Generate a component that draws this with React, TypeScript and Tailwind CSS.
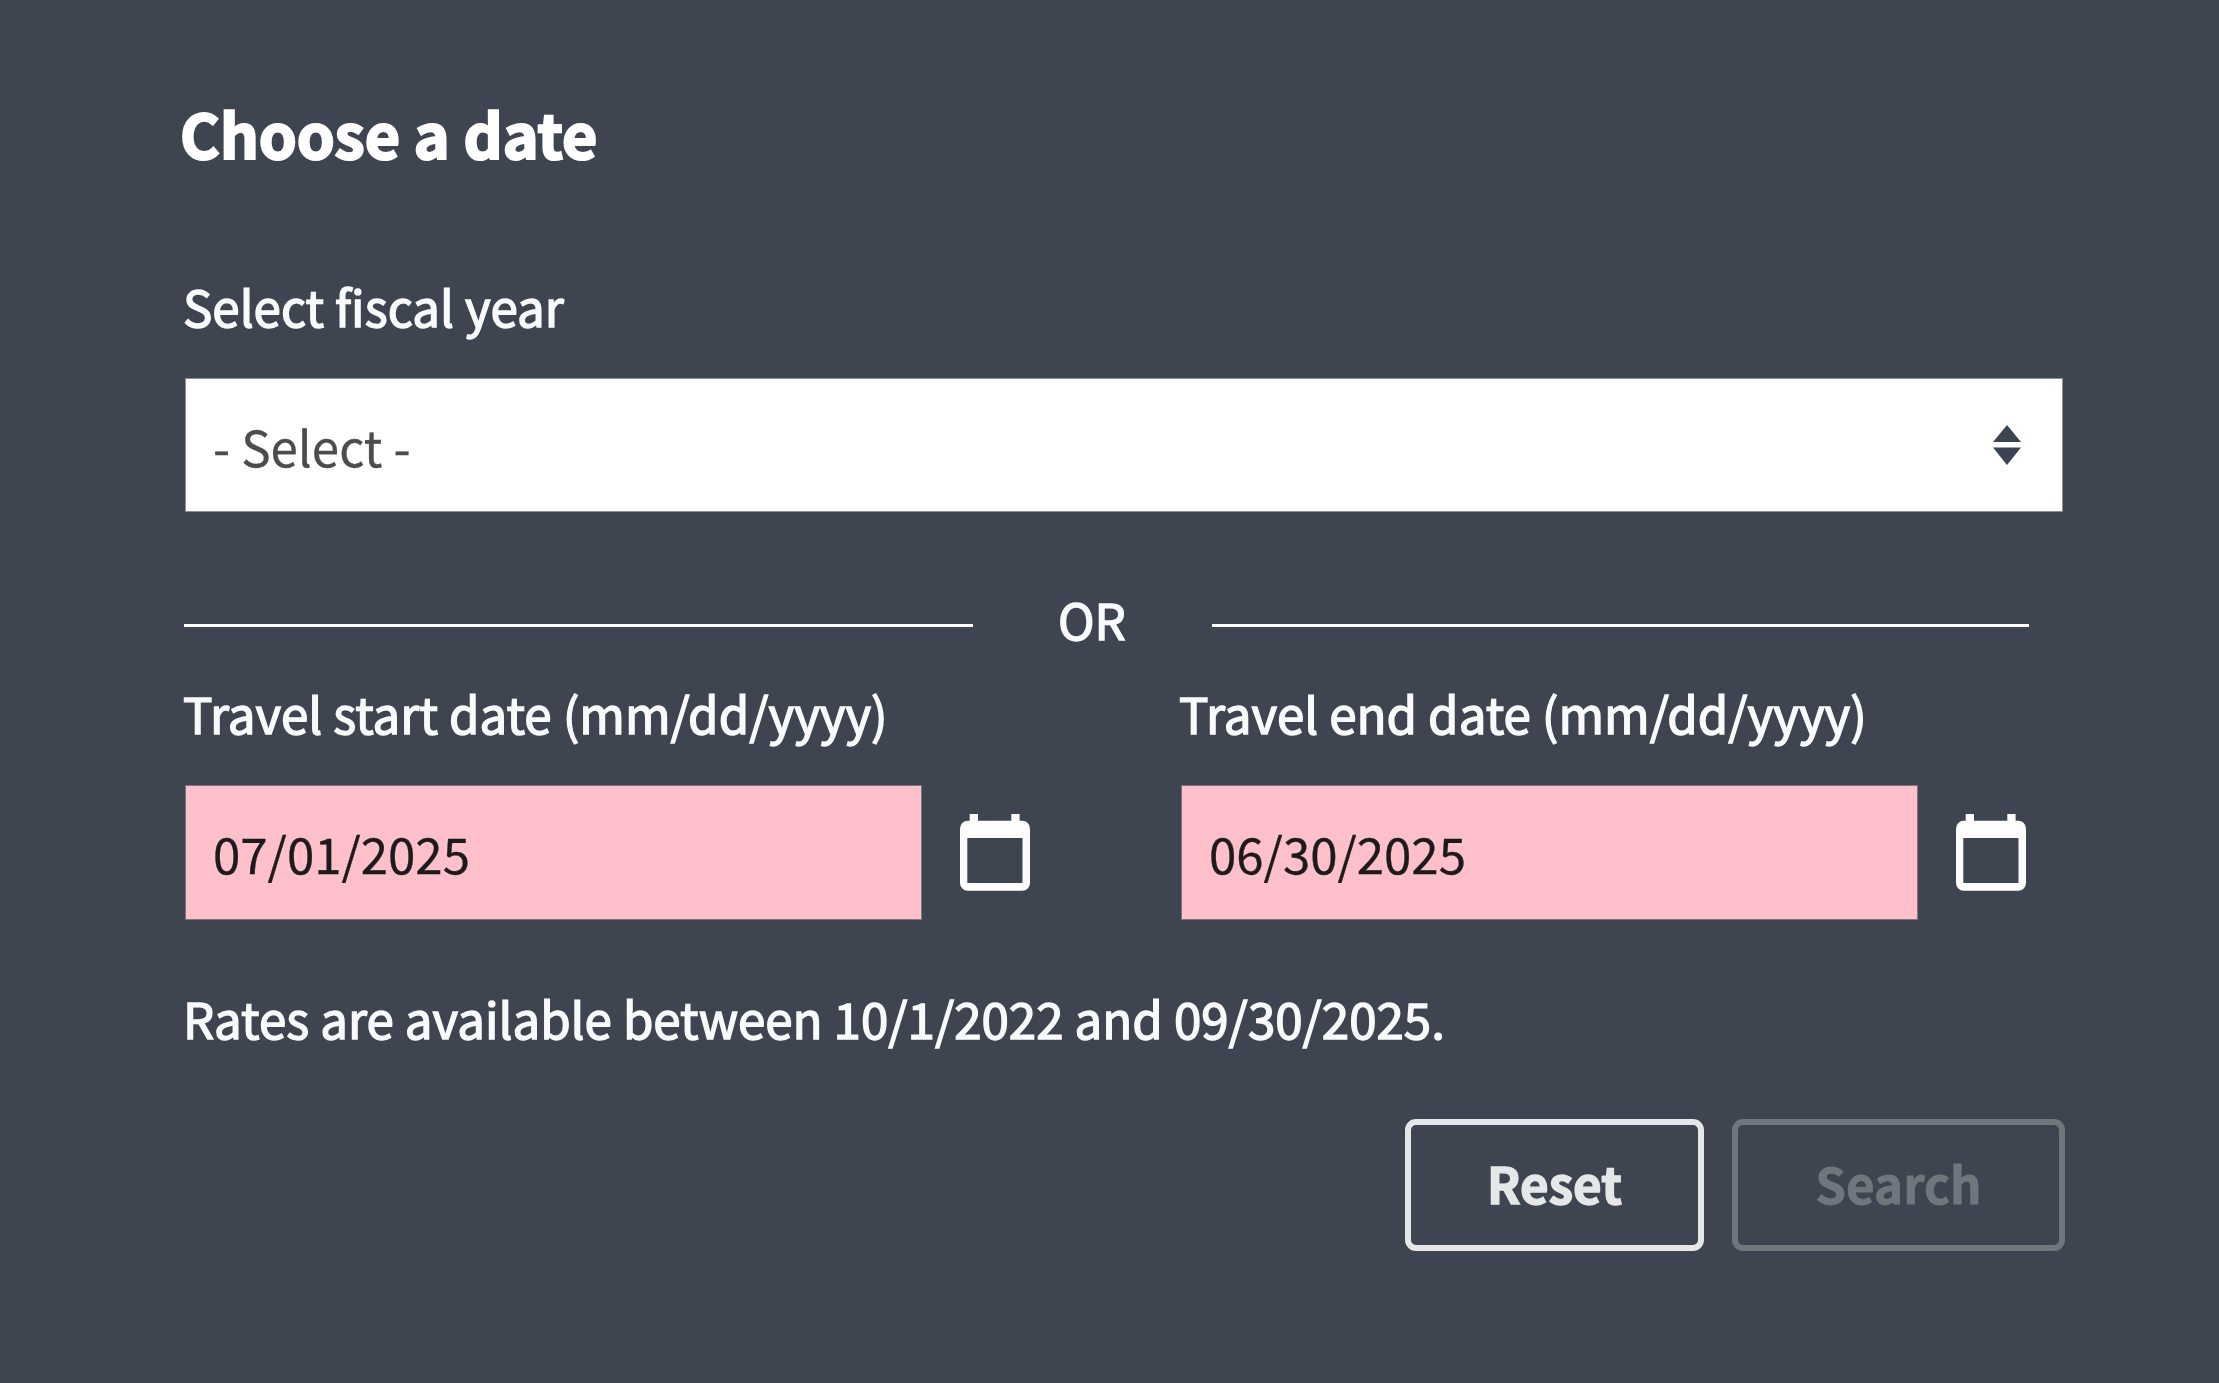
import type { ReactNode } from "react";

function Label({ children }: { children: ReactNode }) {
  return (
    <div className="-ml-px h-[60px] text-[49.25px] leading-[51px] whitespace-nowrap text-[#f9fafb] [-webkit-text-stroke:1.4px_#f9fafb]">
      {children}
    </div>
  );
}

function CalendarIcon() {
  return (
    <svg viewBox="0 0 70 77" className="h-[77px] w-[70px]" fill="#fdfdfe" aria-hidden="true">
      <path
        fillRule="evenodd"
        d="M9.7 0h8.3v6.7h33.3V0h8.3v6.7h2.7a7.7 7.7 0 0 1 7.7 7.7v54.6a7.7 7.7 0 0 1-7.7 7.7H7.7A7.7 7.7 0 0 1 0 69V14.400a7.7 7.7 0 0 1 7.700-7.700h2zM7.300 24v45h55.200V24z"
      />
    </svg>
  );
}

function DateField({ label, value }: { label: string; value: string }) {
  return (
    <div className="w-[846px]">
      <Label>{label}</Label>
      <div className="mt-[38px] ml-px flex items-start">
        <div className="flex h-[135px] w-[738px] items-center border border-[#7b7680] bg-[#ffbfcb] px-[27px] text-[49.2px] leading-none text-[#1b1b1b] [-webkit-text-stroke:0.3px_#1b1b1b]">
          <span className="mt-px">{value}</span>
        </div>
        <button type="button" aria-label="Open calendar" className="mt-[29px] ml-[38px]">
          <CalendarIcon />
        </button>
      </div>
    </div>
  );
}

export default function App() {
  return (
    <main className="flex h-[1383px] w-[2219px] flex-col bg-[#3e4550] pl-[184px] font-['Noto_Sans_CJK_SC','Noto_Sans',sans-serif] text-white">
      <h1 className="mt-[97px] -ml-[4px] h-[72px] text-[60.8px] leading-[72px] font-bold [-webkit-text-stroke:2.2px_white]">
        Choose a date
      </h1>
      <div className="mt-[111px]">
        <Label>Select fiscal year</Label>
      </div>
      <div className="mt-[38px] ml-px flex h-[134px] w-[1878px] items-center justify-between border border-[#8b8f96] bg-white pr-[41px] pl-[27px]">
        <span className="mt-[2px] text-[49.3px] leading-none text-[#4c4c4c] [-webkit-text-stroke:0.3px_#4c4c4c]">- Select -</span>
        <svg viewBox="0 0 28 40" className="h-[40px] w-[28px]" fill="#3d4351" aria-hidden="true">
          <path d="M14 0l14 17H0zM14 40L0 22.500h28z" />
        </svg>
      </div>
      <div className="mt-[81px] flex h-[60px] items-center">
        <div className="mt-[5px] h-[3px] w-[789px] bg-white" />
        <div className="flex w-[239px] justify-center">
          <Label>OR</Label>
        </div>
        <div className="mt-[5px] h-[3px] w-[817px] bg-white" />
      </div>
      <div className="mt-[34px] flex gap-[150px]">
        <DateField label="Travel start date (mm/dd/yyyy)" value="07/01/2025" />
        <DateField label="Travel end date (mm/dd/yyyy)" value="06/30/2025" />
      </div>
      <div className="mt-[72px]">
        <Label>Rates are available between 10/1/2022 and 09/30/2025.</Label>
      </div>
      <div className="mt-[67px] mr-[154px] flex justify-end gap-[28px] text-[49.3px] leading-none font-bold">
        <button type="button" className="h-[132px] w-[299px] rounded-[11px] border-[6px] border-[#e6e7e8] pb-[4px] text-[#e6e7e8] [-webkit-text-stroke:1.4px_#e6e7e8]">
          Reset
        </button>
        <button type="button" disabled className="h-[132px] w-[333px] rounded-[11px] border-[6px] border-[#70777c] pb-[4px] text-[#70777c] [-webkit-text-stroke:0.8px_#70777c]">
          Search
        </button>
      </div>
    </main>
  );
}
